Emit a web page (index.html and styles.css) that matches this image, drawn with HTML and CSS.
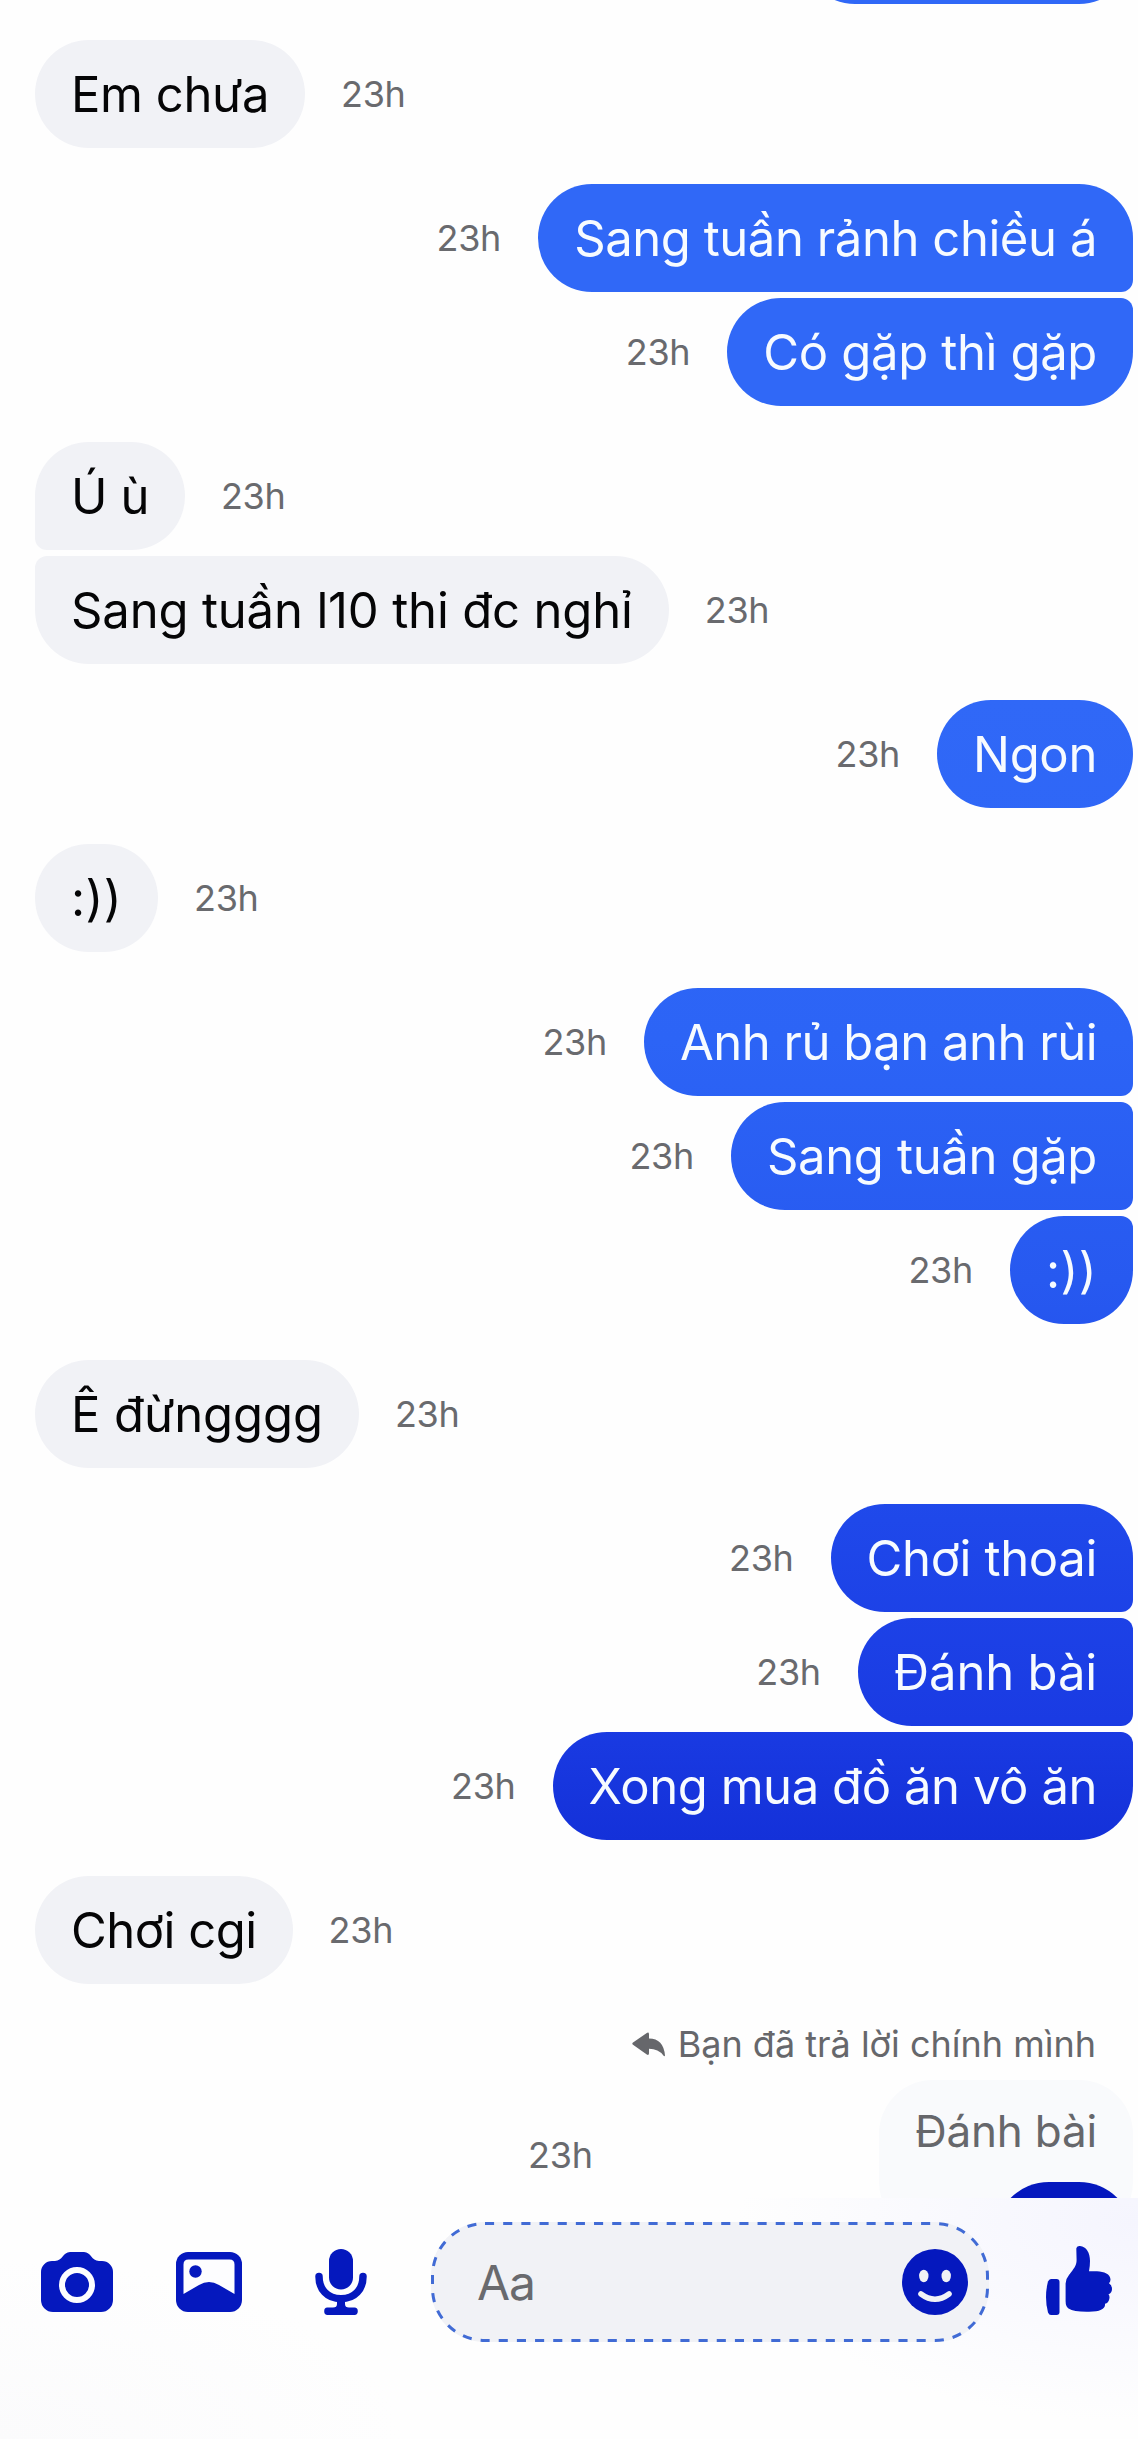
FILE: index.html
```html
<!DOCTYPE html>
<html lang="vi">
<head>
<meta charset="utf-8">
<meta name="viewport" content="width=device-width">
<title>Tin nhắn</title>
<link rel="stylesheet" href="styles.css">
</head>
<body>
<div class="app">
  <main class="thread">
    <section class="group out">
      <div class="row"><div class="bubble cut"></div></div>
    </section>
    <section class="group in">
      <div class="row"><div class="bubble">Em chưa</div><time>23h</time></div>
    </section>
    <section class="group out">
      <div class="row"><time>23h</time><div class="bubble">Sang tuần rảnh chiều á</div></div>
      <div class="row"><time>23h</time><div class="bubble mid">Có gặp thì gặp</div></div>
    </section>
    <section class="group in">
      <div class="row"><div class="bubble">Ú ù</div><time>23h</time></div>
      <div class="row"><div class="bubble loose">Sang tuần l10 thi đc nghỉ</div><time>23h</time></div>
    </section>
    <section class="group out">
      <div class="row"><time>23h</time><div class="bubble mid">Ngon</div></div>
    </section>
    <section class="group in">
      <div class="row"><div class="bubble smile">:))</div><time>23h</time></div>
    </section>
    <section class="group out">
      <div class="row"><time>23h</time><div class="bubble tight">Anh rủ bạn anh rùi</div></div>
      <div class="row"><time>23h</time><div class="bubble mid">Sang tuần gặp</div></div>
      <div class="row"><time>23h</time><div class="bubble smile">:))</div></div>
    </section>
    <section class="group in">
      <div class="row"><div class="bubble open">Ê đừngggg</div><time>23h</time></div>
    </section>
    <section class="group out">
      <div class="row"><time>23h</time><div class="bubble mid">Chơi thoai</div></div>
      <div class="row"><time>23h</time><div class="bubble loose">Đánh bài</div></div>
      <div class="row"><time>23h</time><div class="bubble">Xong mua đồ ăn vô ăn</div></div>
    </section>
    <section class="group in">
      <div class="row"><div class="bubble tight">Chơi cgi</div><time>23h</time></div>
    </section>
    <section class="group out">
      <div class="row">
        <time>23h</time>
        <div class="reply">
          <div class="reply-label">
            <svg width="34" height="26" viewBox="0 0 34 26"><path d="M1 11.6 14.8 1.9Q17 .8 17 3.2V7.400Q31.500 7.400 33 24.500Q32.600 25.700 31.400 24.600Q26.500 17.800 17 17.800V22.200Q17 24.600 14.800 23.600L1 13.800Q-.4 12.700 1 11.600Z"/></svg>
            <span>Bạn đã trả lời chính mình</span>
          </div>
          <div class="quote">Đánh bài</div>
          <div class="bubble short"></div>
        </div>
      </div>
    </section>
  </main>
  <footer class="composer">
    <svg class="camera" width="72" height="60" viewBox="0 0 72 60">
      <path d="M29 0H43C50 0 50.500 9 58 9H61A11 11 0 0 1 72 20V48A12 12 0 0 1 60 60H12A12 12 0 0 1 0 48V20A11 11 0 0 1 11 9H14C21.500 9 22 0 29 0Z"/>
      <circle class="ring" cx="36" cy="33" r="15"/>
    </svg>
    <svg class="photo" width="66" height="60" viewBox="0 0 66 60">
      <rect width="66" height="60" rx="12"/>
      <path class="paper" d="M12.500 7.500H53.500Q58.500 7.500 58.500 12.500V42L43 33Q33 27 23 33L7.500 42V12.500Q7.500 7.500 12.500 7.500Z"/>
      <circle cx="19.500" cy="19.500" r="6.200"/>
    </svg>
    <svg class="mic" width="52" height="66" viewBox="0 0 52 66">
      <rect x="14" width="24" height="40.500" rx="12"/>
      <path class="cradle" d="M4 27.500C4 40 12 49.700 26 49.700S48 40 48 27.500"/>
      <path d="M22 50H30V55Q30 58.500 34 58.500H39.500Q42.800 58.500 42.800 62.200T39.500 66H12.500Q9.200 66 9.200 62.200T12.500 58.500H18Q22 58.500 22 55Z"/>
    </svg>
    <div class="field">
      <svg class="outline" width="558" height="120" viewBox="0 0 558 120"><rect x="1.500" y="1.500" width="555" height="117" rx="52.500"/></svg>
      <span class="placeholder">Aa</span>
      <svg class="emoji" width="66" height="66" viewBox="0 0 66 66">
        <circle cx="33" cy="33" r="33"/>
        <ellipse class="eye" cx="21.800" cy="27" rx="4.700" ry="6.200"/>
        <ellipse class="eye" cx="44.200" cy="27" rx="4.700" ry="6.200"/>
        <path class="mouth" d="M19 45Q33 55.500 47 45"/>
      </svg>
    </div>
    <svg class="like" width="66" height="69" viewBox="0 0 66 69">
      <path d="M5 33H10.500Q13.500 33 13.500 36V66Q13.500 69 10.500 69H5Q3 69 2 66.500Q-2 51 2 35.500Q3 33 5 33Z"/>
      <path d="M30.300 2.600Q30.600-.2 34 0C40.500.4 44 7 44 15Q44 20 43 25.200H51C58 25.500 64.500 28 64.500 33.500Q64.500 35.500 63 37.200Q66 39 66 43T62.500 48.300Q64 50 63.300 53Q62.500 57 59 57.700Q60 65.700 43 65.700Q28 66 22.500 62.500Q19.600 60.500 19.600 55V37.500Q19.600 33 23 29C28 22.500 30.600 19.500 30.600 14Z"/>
    </svg>
  </footer>
</div>
</body>
</html>
```

FILE: styles.css
```css
* { box-sizing: border-box; }

body {
  margin: 0;
  background: #fefefe;
  font-family: Inter, "Noto Sans", sans-serif;
}

svg { display: block; flex: none; }

.app {
  display: flex;
  flex-direction: column;
  height: 2439px;
  overflow: hidden;
}

/* Conversation */
.thread {
  display: flex;
  flex-direction: column;
  gap: 36px;
  height: 2198px;
  padding: 0 5px 0 35px;
  overflow: hidden;
}

.thread > .group:first-child { margin-top: -104px; }

.group {
  display: flex;
  flex-direction: column;
  flex: none;
  gap: 6px;
}

.row {
  display: flex;
  align-items: center;
  gap: 36px;
}

.out .row { justify-content: flex-end; gap: 37px; }

time {
  font-size: 36px;
  line-height: 43px;
  letter-spacing: -0.3px;
  color: #696a6e;
}

.bubble {
  height: 108px;
  padding: 0 36px;
  border-radius: 54px;
  font-size: 49px;
  line-height: 109px;
  letter-spacing: -0.43px;
  white-space: nowrap;
}

.in .bubble { background: #f1f2f6; color: #050506; }

/* One gradient spans the window, each sent bubble shows its slice */
.out .bubble {
  color: #f7fbff;
  background: linear-gradient(#3068f7 0, #3068f7 700px, #2c64f6 1040px, #2759f0 1280px, #1f48ea 1520px, #1a3be3 1720px, #1431d9 1840px, #0518be 2160px) fixed;
}

.out .row:not(:last-child) .bubble { border-bottom-right-radius: 12px; }
.out .row:not(:first-child) .bubble { border-top-right-radius: 12px; }
.in .row:not(:last-child) .bubble { border-bottom-left-radius: 12px; }
.in .row:not(:first-child) .bubble { border-top-left-radius: 12px; }

.bubble.tight { letter-spacing: -0.5px; }
.bubble.mid { letter-spacing: -0.35px; }
.bubble.loose { letter-spacing: -0.16px; }
.bubble.open { letter-spacing: -0.09px; }
.bubble.smile { letter-spacing: 0.38px; }
.bubble.cut { width: 332px; }
.bubble.short { width: 138px; margin-top: -54px; }

/* Reply */
.reply {
  display: flex;
  flex-direction: column;
  align-items: flex-end;
  padding-left: 2px;
}

.reply-label {
  display: flex;
  align-items: center;
  gap: 12px;
  height: 48px;
  margin-bottom: 12px;
  padding-right: 37px;
  font-size: 36px;
  color: #66676b;
  fill: #66676b;
}

.quote {
  height: 156px;
  padding: 26px 36px 0;
  border-radius: 54px;
  background: #f9fafc;
  font-size: 44px;
  line-height: 50px;
  letter-spacing: -0.2px;
  color: #66676b;
}

/* Composer */
.composer {
  display: flex;
  align-items: flex-start;
  height: 241px;
  padding: 24px 26px 0 41px;
  fill: #0518be;
  background:
    radial-gradient(ellipse 400px 200px at 100% 10%, #f5f5fe, rgba(254, 254, 254, 0)),
    radial-gradient(ellipse 400px 180px at 0 100%, #fbfbfc, rgba(254, 254, 254, 0)),
    #fefefe;
}

.camera { margin: 30px 63px 0 0; }
.photo { margin: 30px 73px 0 0; }
.mic { margin: 27px 64px 0 0; }
.like { margin: 24px 0 0 57px; }

.ring { fill: none; stroke: #fdfdff; stroke-width: 6; }
.paper { fill: #fdfdff; }
.cradle { fill: none; stroke: #0518be; stroke-width: 7.5; stroke-linecap: round; }

.field {
  position: relative;
  display: flex;
  flex: none;
  align-items: center;
  justify-content: space-between;
  width: 558px;
  height: 120px;
  padding: 0 21px 0 46px;
  border-radius: 54px;
  background: #f1f2f6;
}

.outline {
  position: absolute;
  inset: 0;
  fill: none;
  stroke: #416bd5;
  stroke-width: 3;
  stroke-dasharray: 9.1 9.07;
}

.placeholder { font-size: 48px; letter-spacing: -1px; color: #696a6e; }

.eye { fill: #f1f2f6; }
.mouth { fill: none; stroke: #f1f2f6; stroke-width: 5.600; stroke-linecap: round; }
```
